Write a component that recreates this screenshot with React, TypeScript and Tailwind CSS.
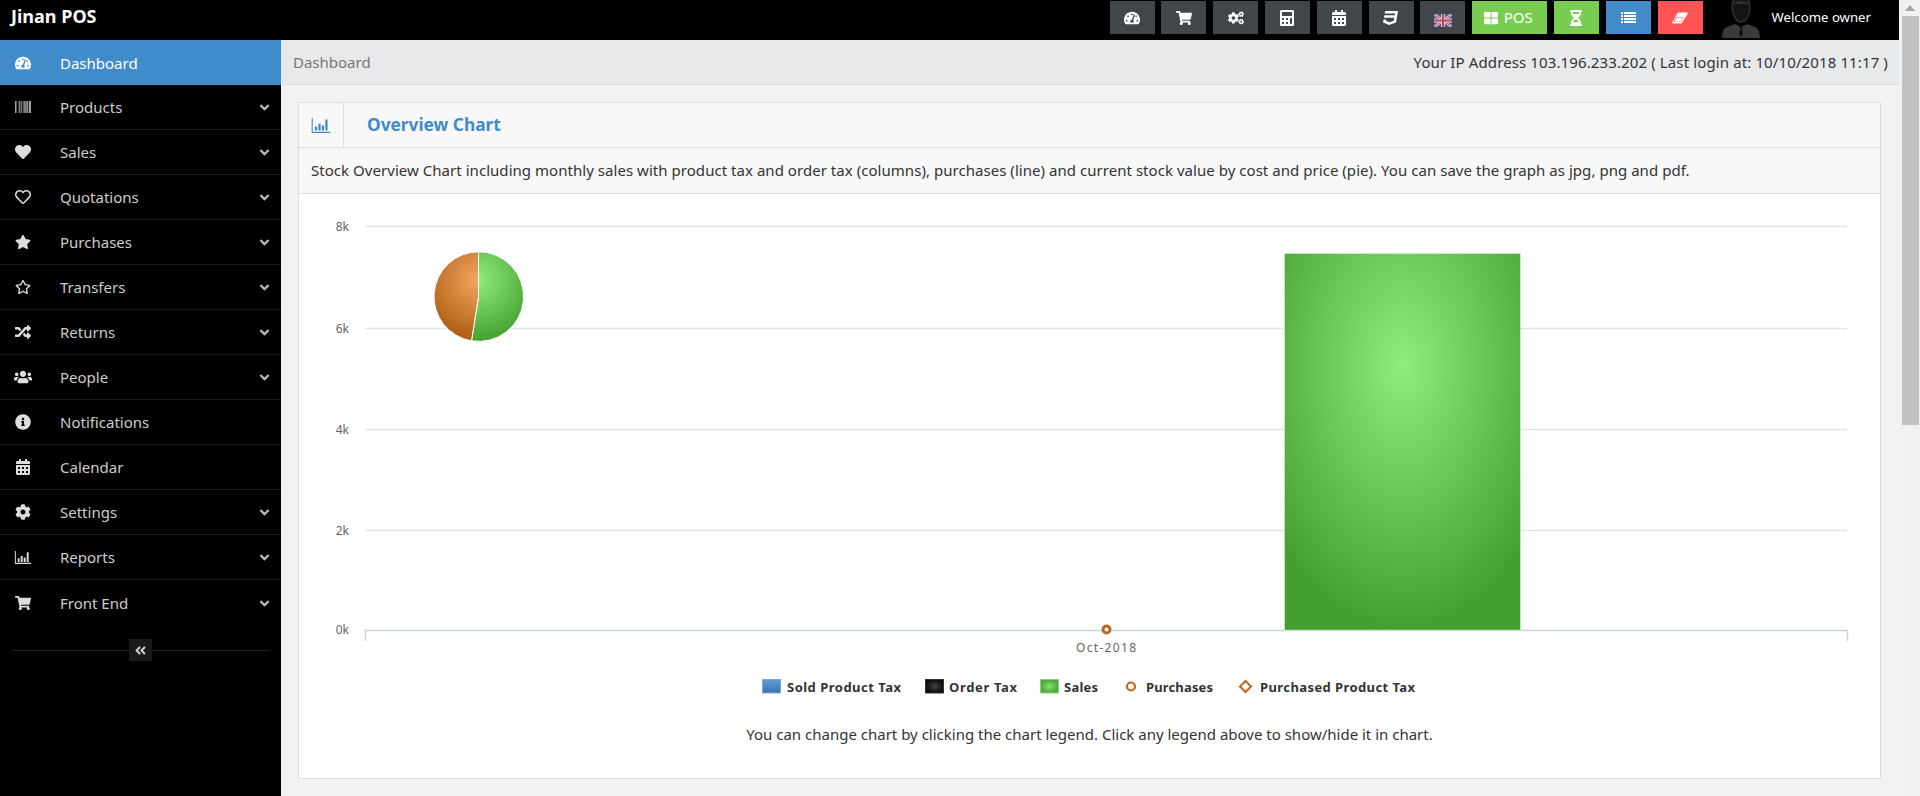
import type { ReactNode } from 'react';
import {
  FaAngleDoubleLeft,
  FaAngleDown,
  FaBarcode,
  FaCalculator,
  FaCalendarAlt,
  FaCog,
  FaCogs,
  FaCss3,
  FaHeart,
  FaHourglassHalf,
  FaInfoCircle,
  FaRandom,
  FaRegHeart,
  FaRegStar,
  FaShoppingCart,
  FaStar,
  FaTachometerAlt,
  FaThLarge,
  FaUsers,
} from 'react-icons/fa';

const UI_FONT = "font-['Noto_Sans','Open_Sans',sans-serif]";

function BarChartIcon({ className }: { className?: string }) {
  return (
    <svg viewBox="0 0 20 16" className={className} fill="currentColor">
      <path d="M0 0h1.2v14.6H20V16H0z" />
      <path d="M3.5 9h2.4v4.4H3.5zM7.2 6h2.4v7.4H7.2zM10.9 8h2.4v5.4h-2.4zM14.600 1.500H17v11.900h-2.400z" />
    </svg>
  );
}

function EraserIcon() {
  return (
    <svg viewBox="0 0 16 12" className="h-[12px] w-[16px]" fill="currentColor">
      <path d="M5.500 1 A1 1 0 0 1 6.300 .5 H15 A.8 .8 0 0 1 15.700 1.700 L10 10.800 A1.500 1.500 0 0 1 9 11.500 H1 A.8 .8 0 0 1 .3 10.300 Z" />
      <path d="M4.200 5 L1.500 10 H8.800 L11.600 5 Z" fill="#ff5454" />
      <path d="M4.800 5.600 L2.500 9.800 H8.600 L11 5.600 Z" fill="#ffffff" />
    </svg>
  );
}

function ListIcon() {
  return (
    <svg viewBox="0 0 15 11" className="h-[11px] w-[15px]" fill="currentColor">
      <path d="M0 0h2v2H0zM3 0h12v2H3zM0 3h2v2H0zM3 3h12v2H3zM0 6h2v2H0zM3 6h12v2H3zM0 9h2v2H0zM3 9h12v2H3z" />
    </svg>
  );
}

function UkFlag() {
  return (
    <svg viewBox="0 0 18 13" className="mt-[5px] h-[13px] w-[18px] opacity-90">
      <rect width="18" height="13" fill="#4a5a9c" />
      <path d="M0 0l18 13M18 0L0 13" stroke="#e8e4ec" strokeWidth="2.6" />
      <path d="M0 0l18 13M18 0L0 13" stroke="#d0455f" strokeWidth="1" />
      <path d="M9 0v13M0 6.500h18" stroke="#e8e4ec" strokeWidth="4" />
      <path d="M9 0v13M0 6.500h18" stroke="#d0455f" strokeWidth="2.200" />
    </svg>
  );
}

function Avatar() {
  return (
    <svg viewBox="0 0 38 38" className="h-[38px] w-[38px]">
      <path d="M19 -3c-6 0-9 4-9 10 0 7 4 15 9 15s9-8 9-15c0-6-3-10-9-10z" fill="#141414" stroke="#333333" strokeWidth="1.400" />
      <path d="M10.500 5c2-5 15-5 17 0-3-2-5-1-8.500-1s-6-1-8.500 1z" fill="#333333" />
      <path d="M13 24l-9 3.500C1 29 .5 33 0 38h38c-.5-5-1-9-4-10.500L25 24l-6 3z" fill="#3a3a3a" />
      <path d="M17.500 27h3l-.5 2 1 5-2 3-2-3 1-5z" fill="#111111" />
    </svg>
  );
}

function TopButton({ color, children, wide }: { color: string; children: ReactNode; wide?: boolean }) {
  return (
    <a className={`flex h-[33px] items-center justify-center gap-[6px] text-white ${wide ? 'w-[75px] pr-[3px]' : 'w-[45px]'} ${color}`}>
      {children}
    </a>
  );
}

const menu = [
  { label: 'Dashboard', icon: <FaTachometerAlt />, active: true },
  { label: 'Products', icon: <FaBarcode />, more: true },
  { label: 'Sales', icon: <FaHeart />, more: true },
  { label: 'Quotations', icon: <FaRegHeart />, more: true },
  { label: 'Purchases', icon: <FaStar />, more: true },
  { label: 'Transfers', icon: <FaRegStar />, more: true },
  { label: 'Returns', icon: <FaRandom />, more: true },
  { label: 'People', icon: <FaUsers className="h-[18px] w-[18px]" />, more: true },
  { label: 'Notifications', icon: <FaInfoCircle /> },
  { label: 'Calendar', icon: <FaCalendarAlt /> },
  { label: 'Settings', icon: <FaCog />, more: true },
  { label: 'Reports', icon: <BarChartIcon className="h-[13px] w-[18px]" />, more: true },
  { label: 'Front End', icon: <FaShoppingCart />, more: true },
];

function Sidebar() {
  return (
    <aside className="w-[281px] shrink-0 bg-black">
      {menu.map((item, i) => (
        <a
          key={item.label}
          className={`flex h-[45px] items-center ${
            item.active
              ? 'bg-[#428bca] text-white'
              : `text-[#cccccc] ${i < menu.length - 1 ? 'border-b border-[#1a1a1a]' : ''}`
          }`}
        >
          <span className={`flex w-[46px] justify-center text-[16px] ${item.active ? 'text-white' : 'text-[#dddddd]'}`}>{item.icon}</span>
          <span className="ml-[14px] flex-1 pt-px text-[15px]">{item.label}</span>
          {item.more && <FaAngleDown className="mr-[9px] mt-px h-[15px] w-[15px] text-[#bbbbbb]" />}
        </a>
      ))}
      <div className="relative mx-[11px] mt-[25px] h-px bg-[#1f1f1f]">
        <button className="absolute -top-[11px] left-[118px] flex h-[22px] w-[23px] items-center justify-center bg-[#1a1a1a] text-[#cccccc]">
          <FaAngleDoubleLeft className="h-[13px] w-[13px]" />
        </button>
      </div>
    </aside>
  );
}

function Chart() {
  const grid = [
    { y: 226, label: '8k' },
    { y: 328, label: '6k' },
    { y: 429, label: '4k' },
    { y: 530, label: '2k' },
  ];
  const axisText = 'fill-[#666666] text-[12px]';
  const legendText = 'fill-[#333333] text-[13px] font-bold';
  return (
    <svg viewBox="299 194 1581 510" className="block h-[510px] w-full">
      <defs>
        <radialGradient id="barGreen" cx="0.5" cy="0.3" r="0.7">
          <stop offset="0" stopColor="#90ed7d" />
          <stop offset="1" stopColor="#43a02f" />
        </radialGradient>
        <radialGradient id="pieGreen" gradientUnits="userSpaceOnUse" cx="478" cy="280" r="62">
          <stop offset="0" stopColor="#90ed7d" />
          <stop offset="1" stopColor="#43a02f" />
        </radialGradient>
        <radialGradient id="pieOrange" gradientUnits="userSpaceOnUse" cx="478" cy="280" r="62">
          <stop offset="0" stopColor="#f4a55f" />
          <stop offset="1" stopColor="#ab5a10" />
        </radialGradient>
        <linearGradient id="legendBlue" x1="0" y1="0" x2="0" y2="1">
          <stop offset="0" stopColor="#5f9bd8" />
          <stop offset="1" stopColor="#3a76ad" />
        </linearGradient>
        <radialGradient id="legendBlack">
          <stop offset="0" stopColor="#444444" />
          <stop offset="1" stopColor="#0c0c0c" />
        </radialGradient>
        <radialGradient id="legendGreen">
          <stop offset="0" stopColor="#86e274" />
          <stop offset="1" stopColor="#4aa836" />
        </radialGradient>
      </defs>

      {grid.map(g => (
        <g key={g.y}>
          <line x1="365" x2="1847" y1={g.y + 0.5} y2={g.y + 0.5} stroke="#e3e3e3" strokeWidth="1.5" />
          <text x="349" y={g.y + 5} textAnchor="end" className={axisText}>{g.label}</text>
        </g>
      ))}
      <text x="349" y="634" textAnchor="end" className={axisText}>0k</text>
      <path d="M365.500 641V630.500H1847.500V641" fill="none" stroke="#c8d6e4" strokeWidth="1.5" />

      <rect x="1284.500" y="253.500" width="236" height="376.500" fill="url(#barGreen)" stroke="#ffffff" strokeOpacity="0.35" />

      <path d="M478.500 296.600 L478.500 251.800 A44.800 44.800 0 1 1 471.500 340.800 Z" fill="url(#pieGreen)" stroke="#ffffff" />
      <path d="M478.500 296.600 L471.500 340.800 A44.800 44.800 0 0 1 478.500 251.800 Z" fill="url(#pieOrange)" stroke="#ffffff" />

      <circle cx="1106.500" cy="629.500" r="3.500" fill="#ffffff" stroke="#c0651d" strokeWidth="3" />
      <text x="1106" y="652" textAnchor="middle" className={axisText} textLength="60">Oct-2018</text>

      <rect x="762.500" y="679.500" width="18" height="13.500" fill="url(#legendBlue)" stroke="#7fa9cf" />
      <text x="787" y="692" className={legendText} textLength="114">Sold Product Tax</text>
      <rect x="925.500" y="679.500" width="18" height="13.500" fill="url(#legendBlack)" stroke="#333333" />
      <text x="949" y="692" className={legendText} textLength="68">Order Tax</text>
      <rect x="1040.500" y="679.500" width="18" height="13.500" fill="url(#legendGreen)" stroke="#8fcf84" />
      <text x="1064" y="692" className={legendText} textLength="34">Sales</text>
      <circle cx="1131" cy="686.500" r="4" fill="#ffffff" stroke="#c0651d" strokeWidth="2.200" />
      <text x="1146" y="692" className={legendText} textLength="67">Purchases</text>
      <path d="M1245.500 681L1251 686.500L1245.500 692L1240 686.500Z" fill="#ffffff" stroke="#c0651d" strokeWidth="2" />
      <text x="1260" y="692" className={legendText} textLength="155">Purchased Product Tax</text>
    </svg>
  );
}

export default function App() {
  return (
    <div className={`flex h-[796px] overflow-hidden bg-[#f2f2f2] ${UI_FONT}`}>
      <div className="flex min-w-0 flex-1 flex-col">
        <header className="flex h-10 shrink-0 items-start bg-black">
          <a className="ml-[11px] mt-[3px] flex-1 text-[18px] font-bold leading-[26px] text-white">Jinan POS</a>
          <div className="mt-px flex gap-[6.800px] text-[16px]">
            <TopButton color="bg-[#41464b]"><FaTachometerAlt /></TopButton>
            <TopButton color="bg-[#41464b]"><FaShoppingCart /></TopButton>
            <TopButton color="bg-[#41464b]"><FaCogs /></TopButton>
            <TopButton color="bg-[#41464b]"><FaCalculator /></TopButton>
            <TopButton color="bg-[#41464b]"><FaCalendarAlt /></TopButton>
            <TopButton color="bg-[#41464b]"><FaCss3 /></TopButton>
            <TopButton color="bg-[#41464b]"><UkFlag /></TopButton>
            <TopButton color="bg-[#78cd51]" wide><FaThLarge className="text-[14px]" /><span className="text-[15px]">POS</span></TopButton>
            <TopButton color="bg-[#78cd51]"><FaHourglassHalf /></TopButton>
            <TopButton color="bg-[#428bca]"><ListIcon /></TopButton>
            <TopButton color="bg-[#ff5454]"><EraserIcon /></TopButton>
          </div>
          <div className="ml-[19px] mr-[28px] flex h-10 items-start">
            <Avatar />
            <span className="ml-[12px] mt-[6px] text-[13.200px] leading-[22px] text-white">Welcome owner</span>
          </div>
        </header>

        <div className="flex min-h-0 flex-1">
          <Sidebar />
          <main className="min-w-0 flex-1">
            <div className="flex h-[45px] items-center justify-between border-b border-[#dbdee0] bg-[#e8e9eb] pl-3 pr-[11px] text-[15px]">
              <span className="text-[#777777]">Dashboard</span>
              <span className="tracking-[0.12px] text-[#333333]">Your IP Address 103.196.233.202 ( Last login at: 10/10/2018 11:17 )</span>
            </div>
            <section className="ml-[17px] mr-[18px] mt-[17px] border border-[#dbdee0] bg-white">
              <div className="flex h-[45px] items-center border-b border-[#dbdee0] bg-[#f8f8f8]">
                <div className="flex h-full w-[45px] items-center justify-center border-r border-[#dbdee0] text-[#428bca]">
                  <BarChartIcon className="h-[15px] w-[20px]" />
                </div>
                <h2 className="ml-[23px] text-[17.300px] font-bold text-[#428bca]">Overview Chart</h2>
              </div>
              <p className="flex h-[46px] items-center border-b border-[#dbdee0] bg-[#f8f8f8] pl-3 text-[15px] tracking-[0.04px] text-[#333333]">
                Stock Overview Chart including monthly sales with product tax and order tax (columns), purchases (line) and current stock value by cost and price (pie). You can save the graph as jpg, png and pdf.
              </p>
              <Chart />
              <p className="h-[74px] pt-[19px] text-center text-[15px] text-[#333333]">
                You can change chart by clicking the chart legend. Click any legend above to show/hide it in chart.
              </p>
            </section>
          </main>
        </div>
      </div>

      {/* page scrollbar */}
      <div className="flex w-[21px] shrink-0 flex-col items-center bg-[#f1f1f1]">
        <div className="mt-[5px] h-0 w-0 border-x-[5px] border-b-[6px] border-x-transparent border-b-[#a3a3a3]" />
        <div className="ml-[2px] mt-[5px] h-[409px] w-[17px] bg-[#c1c1c1]" />
      </div>
    </div>
  );
}
